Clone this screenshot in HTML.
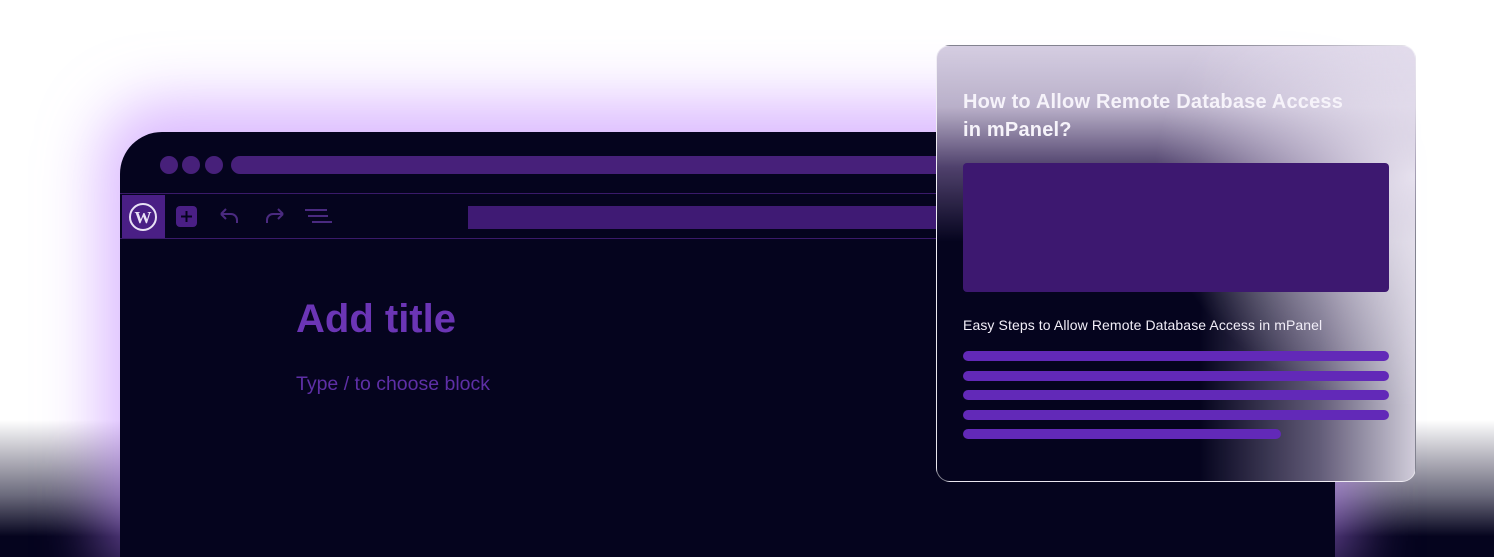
<!DOCTYPE html>
<html style="overflow:hidden;height:557px"><head><meta charset="utf-8"><style>
*{margin:0;padding:0;box-sizing:border-box}
body{width:1494px;height:557px;overflow:hidden;background:#fff;position:relative;font-family:"Liberation Sans",sans-serif}
.bottom{position:absolute;left:0;right:0;top:420px;height:137px;background:linear-gradient(#fff 0,#c9c8cf 20%,#6b6a7c 55%,#05041e 85%)}
.win{position:absolute;left:120px;top:132px;width:1215px;height:425px;background:#05041e;border-radius:42px 42px 0 0;box-shadow:0 -10px 60px 20px rgba(190,130,255,.55)}
.dot{position:absolute;top:156px;width:18px;height:18px;border-radius:50%;background:#47207a}
.abs{position:absolute}
.card{position:absolute;left:936px;top:45px;width:480px;height:437px;border-radius:14px;overflow:hidden;border:1px solid rgba(255,255,255,.5);
background:
radial-gradient(ellipse 260px 230px at 100% 30%,rgba(235,230,242,.95),rgba(235,230,242,0) 100%),
linear-gradient(180deg,rgba(220,212,232,.97) 0,rgba(205,195,220,.9) 14%,rgba(110,90,140,.7) 28%,rgba(5,4,30,0) 45%),
linear-gradient(90deg,rgba(5,4,30,0) 55%,rgba(160,150,180,.6) 80%,rgba(230,226,238,.9) 100%),
#05041e}
</style></head><body>
<div class="bottom"></div>
<div class="win"></div>
<div class="dot" style="left:160px"></div>
<div class="dot" style="left:182px"></div>
<div class="dot" style="left:205px"></div>
<div class="abs" style="left:231px;top:156px;width:720px;height:18px;border-radius:9px;background:#47207a"></div>
<div class="abs" style="left:120px;top:193px;width:830px;height:1px;background:#3a1a6a"></div>
<div class="abs" style="left:120px;top:238px;width:830px;height:1px;background:#3a1a6a"></div>
<div class="abs" style="left:122px;top:195px;width:43px;height:43px;background:#4a1f85"></div>
<svg class="abs" style="left:128px;top:202px" width="30" height="30" viewBox="0 0 30 30"><circle cx="15" cy="15" r="13" fill="none" stroke="#e9e2f5" stroke-width="2"/><text x="15" y="21" text-anchor="middle" font-family="Liberation Serif" font-weight="bold" font-size="17" fill="#e9e2f5">W</text></svg>
<div class="abs" style="left:176px;top:206px;width:21px;height:21px;border-radius:4px;background:#4a1f85"></div>
<svg class="abs" style="left:176px;top:206px" width="21" height="21"><path d="M10.5 5v11M5 10.5h11" stroke="#05041e" stroke-width="2"/></svg>
<svg class="abs" style="left:218px;top:206px" width="24" height="20"><path d="M3 8h10a6 6 0 0 1 6 6v3M3 8l5-5M3 8l5 5" fill="none" stroke="#4a2a80" stroke-width="2"/></svg>
<svg class="abs" style="left:263px;top:206px" width="24" height="20"><path d="M20 8H10a6 6 0 0 0-6 6v3M20 8l-5-5M20 8l-5 5" fill="none" stroke="#4a2a80" stroke-width="2"/></svg>
<svg class="abs" style="left:304px;top:208px" width="28" height="16"><path d="M1 2h22M4 8h20M8 14h20" stroke="#4a2a80" stroke-width="2"/></svg>
<div class="abs" style="left:468px;top:206px;width:480px;height:23px;background:#3f1a74"></div>
<div class="abs" style="left:296px;top:297px;font-size:40px;font-weight:bold;color:#6b35b5">Add title</div>
<div class="abs" style="left:296px;top:373px;font-size:19.5px;color:#5e2fa6">Type / to choose block</div>
<div class="card"></div>
<div class="abs" style="left:963px;top:88px;width:400px;font-size:20px;font-weight:bold;color:#f6f3fa;line-height:28px;letter-spacing:.2px">How to Allow Remote Database Access in mPanel?</div>
<div class="abs" style="left:963px;top:163px;width:426px;height:129px;border-radius:4px;background:#3d1870"></div>
<div class="abs" style="left:963px;top:317px;font-size:14px;color:#f2eef8;letter-spacing:.1px">Easy Steps to Allow Remote Database Access in mPanel</div>
<div class="abs" style="left:963px;top:351px;width:426px;height:10px;border-radius:5px;background:#6229b8"></div>
<div class="abs" style="left:963px;top:371px;width:426px;height:10px;border-radius:5px;background:#6229b8"></div>
<div class="abs" style="left:963px;top:390px;width:426px;height:10px;border-radius:5px;background:#6229b8"></div>
<div class="abs" style="left:963px;top:410px;width:426px;height:10px;border-radius:5px;background:#6229b8"></div>
<div class="abs" style="left:963px;top:429px;width:318px;height:10px;border-radius:5px;background:#6229b8"></div>
</body></html>
